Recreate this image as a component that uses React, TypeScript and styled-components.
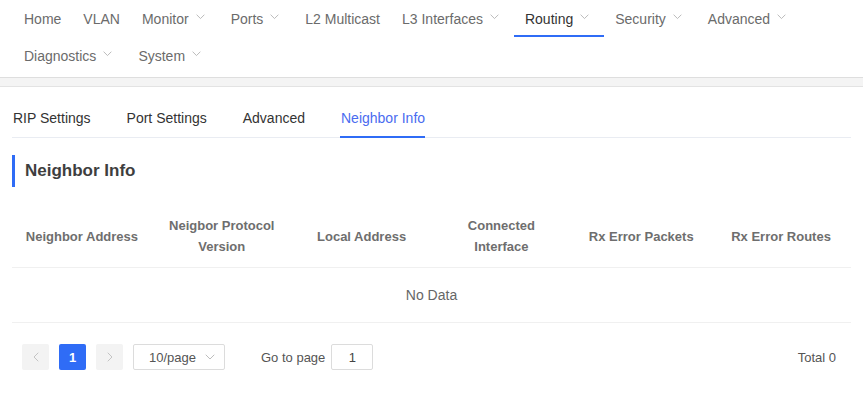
import React from 'react';
import styled, { createGlobalStyle } from 'styled-components';

const BLUE = '#2f6cf6';

const GlobalStyle = createGlobalStyle`
  html, body {
    margin: 0;
    padding: 0;
    background: #fff;
    font-family: 'Liberation Sans', Arial, sans-serif;
  }
  * {
    box-sizing: border-box;
  }
`;

type NavEntry = { label: string; menu?: boolean; active?: boolean };

const navItems: NavEntry[] = [
  { label: 'Home' },
  { label: 'VLAN' },
  { label: 'Monitor', menu: true },
  { label: 'Ports', menu: true },
  { label: 'L2 Multicast' },
  { label: 'L3 Interfaces', menu: true },
  { label: 'Routing', menu: true, active: true },
  { label: 'Security', menu: true },
  { label: 'Advanced', menu: true },
  { label: 'Diagnostics', menu: true },
  { label: 'System', menu: true },
];

const tabs = ['RIP Settings', 'Port Settings', 'Advanced', 'Neighbor Info'];

const columns = [
  'Neighbor Address',
  'Neigbor Protocol Version',
  'Local Address',
  'Connected Interface',
  'Rx Error Packets',
  'Rx Error Routes',
];

function ChevronDown({ width = 9, color = '#b3b3b3' }: { width?: number; color?: string }) {
  return (
    <svg width={width} height={width / 2 + 1} viewBox="0 0 10 6" fill="none">
      <path d="M1 1l4 4 4-4" stroke={color} strokeWidth="1" strokeLinecap="round" strokeLinejoin="round" />
    </svg>
  );
}

function ChevronSide({ dir }: { dir: 'left' | 'right' }) {
  return (
    <svg width="6" height="10" viewBox="0 0 6 10" fill="none">
      <path
        d={dir === 'left' ? 'M5 1L1 5l4 4' : 'M1 1l4 4-4 4'}
        stroke="#c4c4c4"
        strokeWidth="1"
        strokeLinecap="round"
        strokeLinejoin="round"
      />
    </svg>
  );
}

function App() {
  return (
    <>
      <GlobalStyle />
      <Page>
        <TopNav>
          {navItems.map((item) => (
            <NavItem key={item.label} $active={item.active}>
              {item.label}
              {item.menu && (
                <Caret>
                  <ChevronDown />
                </Caret>
              )}
            </NavItem>
          ))}
        </TopNav>
        <Band />
        <Content>
          <TabBar>
            {tabs.map((t) => (
              <Tab key={t} $active={t === 'Neighbor Info'}>
                {t}
              </Tab>
            ))}
          </TabBar>
          <SectionTitle>Neighbor Info</SectionTitle>
          <Table>
            <HeadRow>
              {columns.map((c) => (
                <HeadCell key={c}>{c}</HeadCell>
              ))}
            </HeadRow>
            <EmptyRow>No Data</EmptyRow>
          </Table>
          <Pager>
            <PageButton disabled>
              <ChevronSide dir="left" />
            </PageButton>
            <PageButton $current>1</PageButton>
            <PageButton disabled>
              <ChevronSide dir="right" />
            </PageButton>
            <SizeSelect>
              <span>10/page</span>
              <ChevronDown width={10} color="#bdbdbd" />
            </SizeSelect>
            <Jumper>
              Go to page
              <JumpInput>1</JumpInput>
            </Jumper>
            <Total>Total 0</Total>
          </Pager>
        </Content>
      </Page>
    </>
  );
}

export default App;

const Page = styled.div`
  width: 863px;
  min-height: 398px;
  background: #fff;
`;

const TopNav = styled.nav`
  display: flex;
  flex-wrap: wrap;
  padding: 0 13px 3px;
`;

const NavItem = styled.div<{ $active?: boolean }>`
  display: flex;
  align-items: center;
  height: 37px;
  padding: 2px 11px 0;
  font-size: 14px;
  color: ${(p) => (p.$active ? '#333' : '#6b6b6b')};
  border-bottom: 2px solid ${(p) => (p.$active ? BLUE : 'transparent')};
`;

const Caret = styled.span`
  display: inline-flex;
  margin: -3px 4px 0 7px;
`;

const Band = styled.div`
  height: 10px;
  background: #f4f4f4;
  border-top: 1px solid #dedede;
  border-bottom: 1px solid #e3e3e3;
`;

const Content = styled.div`
  padding: 0 12px;
`;

const TabBar = styled.div`
  display: flex;
  gap: 35px;
  margin-top: 11px;
  border-bottom: 1px solid #e9ecf2;
`;

const Tab = styled.div<{ $active?: boolean }>`
  height: 40px;
  line-height: 40px;
  font-size: 14px;
  padding-left: 1px;
  color: ${(p) => (p.$active ? '#4a6cf0' : '#333')};
  border-bottom: 2px solid ${(p) => (p.$active ? BLUE : 'transparent')};
  margin-bottom: -1px;
`;

const SectionTitle = styled.h2`
  margin: 17px 0 0;
  height: 32px;
  line-height: 32px;
  padding-left: 10px;
  border-left: 3px solid ${BLUE};
  font-size: 17px;
  font-weight: bold;
  color: #3e3e3e;
`;

const Table = styled.div`
  margin-top: 18px;
`;

const HeadRow = styled.div`
  display: grid;
  grid-template-columns: repeat(6, 1fr);
  height: 63px;
  border-bottom: 1px solid #f0f0f0;
`;

const HeadCell = styled.div`
  display: flex;
  align-items: center;
  justify-content: center;
  text-align: center;
  padding: 0 8px;
  font-size: 13px;
  font-weight: bold;
  line-height: 21px;
  color: #6e6e6e;
`;

const EmptyRow = styled.div`
  height: 55px;
  display: flex;
  align-items: center;
  justify-content: center;
  font-size: 14px;
  color: #666;
  border-bottom: 1px solid #f0f0f0;
`;

const Pager = styled.div`
  display: flex;
  align-items: center;
  gap: 10px;
  margin-top: 21px;
  padding: 0 15px 0 10px;
  font-size: 13px;
  color: #555;
`;

const PageButton = styled.div<{ $current?: boolean; disabled?: boolean }>`
  width: 27px;
  height: 26px;
  display: flex;
  align-items: center;
  justify-content: center;
  border-radius: 2px;
  font-size: 13px;
  font-weight: bold;
  background: ${(p) => (p.$current ? BLUE : '#f3f3f3')};
  color: ${(p) => (p.$current ? '#fff' : '#c4c4c4')};
`;

const SizeSelect = styled.div`
  width: 92px;
  height: 26px;
  display: flex;
  align-items: center;
  justify-content: space-between;
  padding: 0 9px 0 15px;
  border: 1px solid #dcdcdc;
  border-radius: 2px;
  color: #555;
`;

const Jumper = styled.div`
  display: flex;
  align-items: center;
  gap: 6px;
  margin-left: 26px;
`;

const JumpInput = styled.div`
  width: 42px;
  height: 26px;
  display: flex;
  align-items: center;
  justify-content: center;
  border: 1px solid #dcdcdc;
  border-radius: 2px;
  color: #444;
`;

const Total = styled.div`
  margin-left: auto;
`;
